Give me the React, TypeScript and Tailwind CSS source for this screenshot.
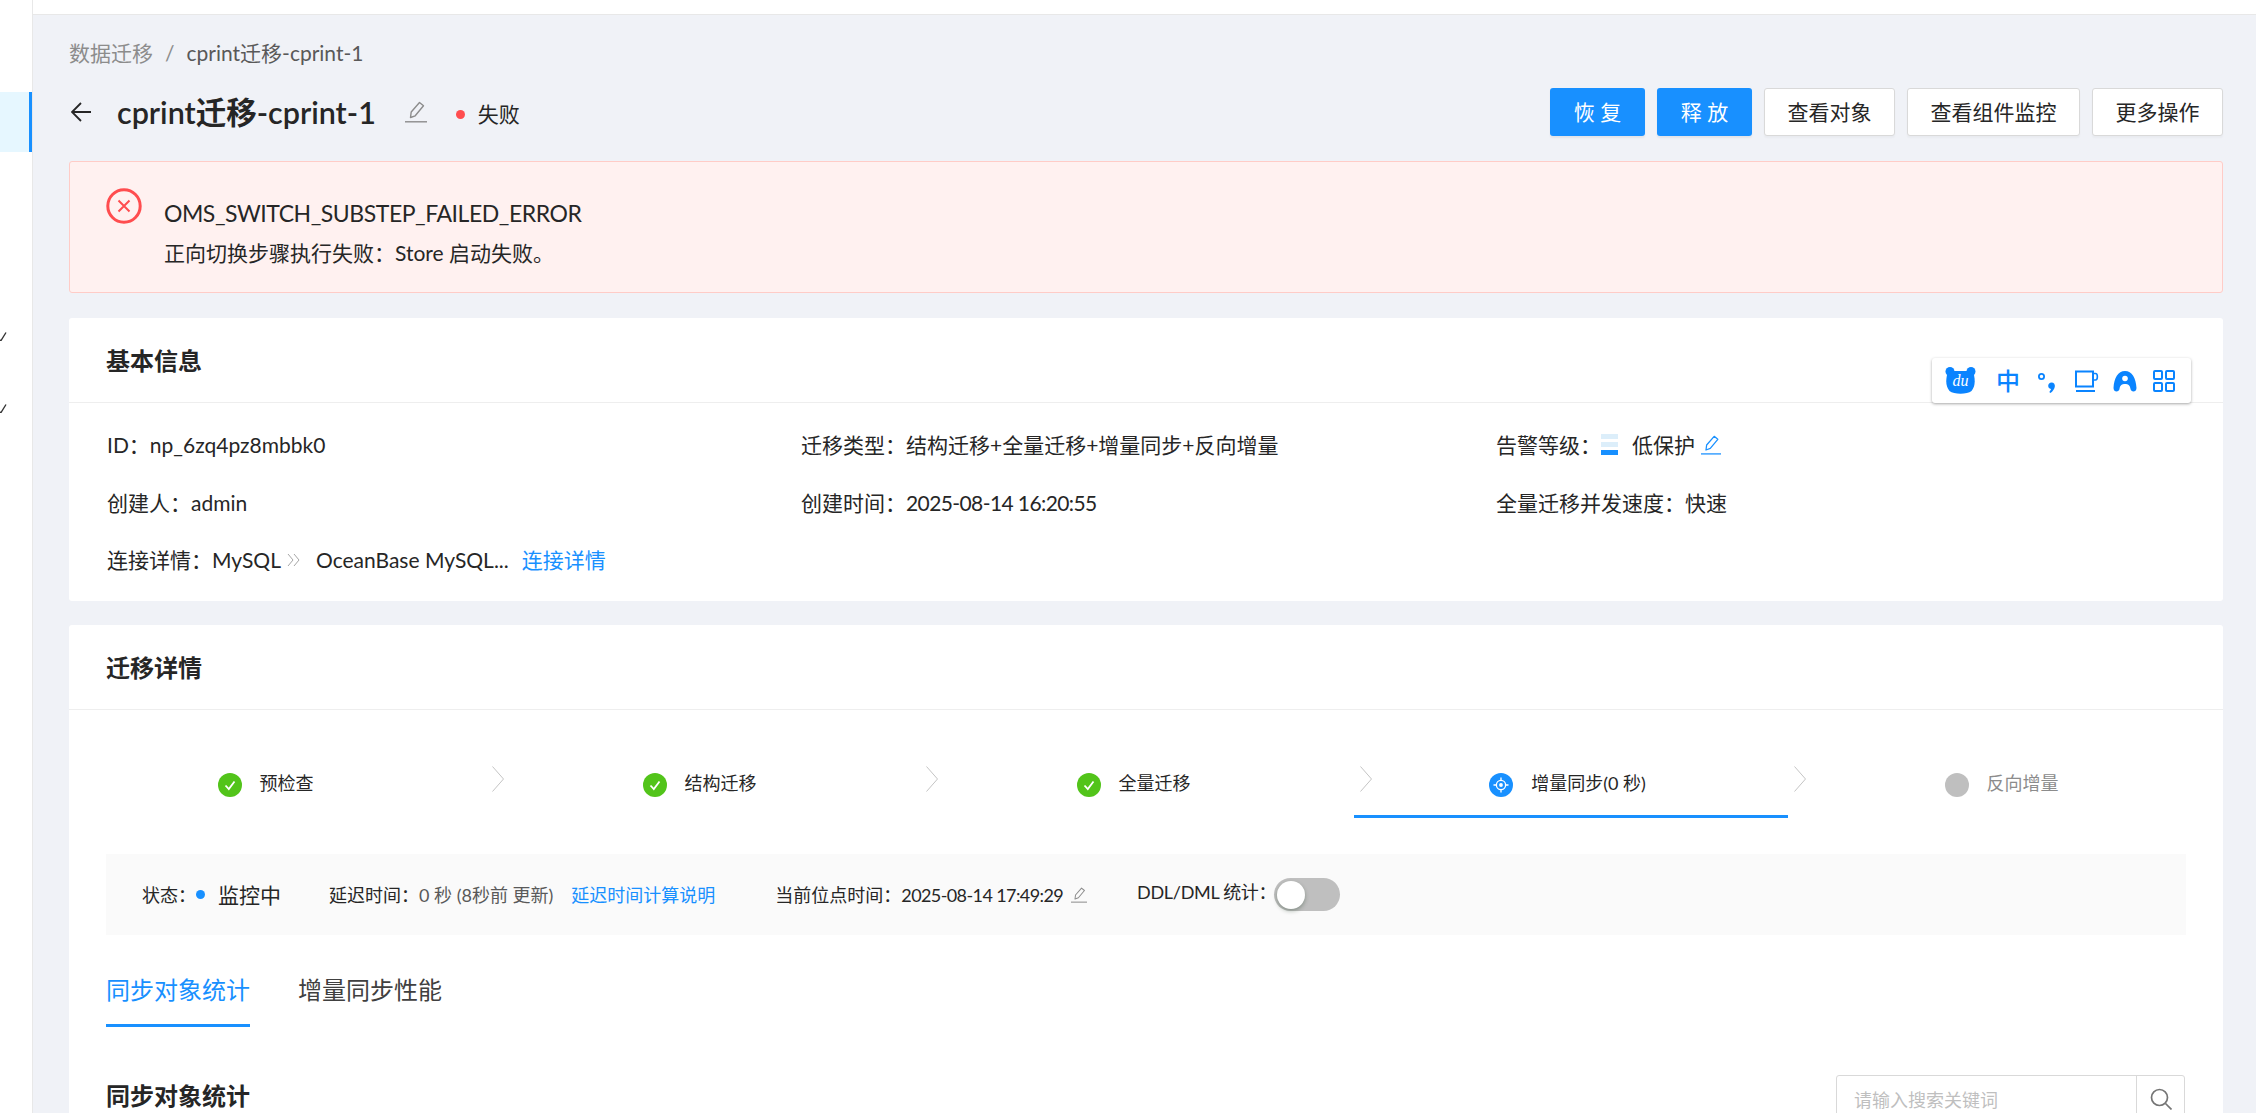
import React from 'react'

const steps = [
  { label: '预检查', state: 'done' },
  { label: '结构迁移', state: 'done' },
  { label: '全量迁移', state: 'done' },
  { label: '增量同步(0 秒)', state: 'active' },
  { label: '反向增量', state: 'pending' }
]

function EditIcon({ className }: { className: string }): React.ReactElement {
  return (
    <svg viewBox="0 0 22 22" fill="none" stroke="currentColor" strokeWidth="1.4" className={className}>
      <path d="M0 20.8H22" />
      <path d="M5.5 16.5L6.2 11L14.5 1.5L18.5 4.8L10.2 14.8L5.5 16.5Z" strokeLinejoin="round" />
    </svg>
  )
}

function StepIcon({ state }: { state: string }): React.ReactElement {
  if (state === 'done') {
    return (
      <svg viewBox="0 0 24 24" className="h-6 w-6 shrink-0">
        <circle cx="12" cy="12" r="12" fill="#52c41a" />
        <path d="M7.5 12.5L10.8 16L16.5 8.5" fill="none" stroke="#fff" strokeWidth="1.8" />
      </svg>
    )
  }
  if (state === 'active') {
    return (
      <svg viewBox="0 0 24 24" className="h-6 w-6 shrink-0">
        <circle cx="12" cy="12" r="12" fill="#1890ff" />
        <circle cx="12" cy="12" r="4.6" fill="none" stroke="#fff" strokeWidth="1.3" />
        <circle cx="12" cy="12" r="1.9" fill="#fff" />
        <path d="M12 4.5V7M12 17V19.5M4.5 12H7M17 12H19.5" stroke="#fff" strokeWidth="1.3" />
      </svg>
    )
  }
  return <span className="h-6 w-6 shrink-0 rounded-full bg-[#bfbfbf]" />
}

function StepChevron(): React.ReactElement {
  return (
    <svg viewBox="0 0 12 26" fill="none" stroke="#c4c4c4" className="absolute top-[11px] right-[-18px] h-[26px] w-3">
      <path d="M0.5 0.5L11.5 13L0.5 25.5" />
    </svg>
  )
}

function InputMethodBar(): React.ReactElement {
  return (
    <div className="absolute top-[40px] left-[1863px] flex h-[45px] w-[259px] items-center rounded-[3px] bg-white pl-[13px] shadow-[0_1px_3px_rgba(0,0,0,0.35)]">
      <div className="relative flex h-[27px] w-[31px] items-center justify-center">
        <svg viewBox="0 0 31 27" className="absolute inset-0 h-full w-full">
          <circle cx="5" cy="4.5" r="4.5" fill="#0a84ff" />
          <circle cx="26" cy="4.5" r="4.5" fill="#0a84ff" />
          <path d="M3 4H28C30.5 13 30.5 19 26.5 24C22 27.5 9 27.5 4.5 24C0.5 19 0.5 13 3 4Z" fill="#0a84ff" />
        </svg>
        <span className="relative [font-family:Liberation_Serif,serif] text-[16px] leading-none text-white italic">du</span>
      </div>
      <span className="ml-[20px] w-[24px] text-[24px] leading-none font-medium text-[#0a84ff]">中</span>
      <svg viewBox="0 0 20 24" className="ml-[16px] h-6 w-5">
        <circle cx="5.5" cy="7.5" r="2.6" fill="none" stroke="#0a84ff" strokeWidth="1.8" />
        <path d="M15.5 13.5C18 13.5 19.3 15.5 18.8 17.8C18.4 20 16.8 22.5 14.5 24L13.2 23C14.3 21.8 14.8 20.8 15 20C13.3 19.8 12.2 18.4 12.2 16.8C12.2 15 13.7 13.5 15.5 13.5Z" fill="#0a84ff" />
      </svg>
      <svg viewBox="0 0 24 24" className="ml-[19px] h-6 w-6" fill="none" stroke="#0a84ff" strokeWidth="2">
        <path d="M1 2.5H18V17.5H1Z" />
        <path d="M18 4.5H20.5C23 4.5 23 11 20.5 11H18" strokeWidth="1.6" />
        <path d="M1 22H20" />
      </svg>
      <svg viewBox="0 0 24 24" className="ml-[14px] h-6 w-6">
        <path d="M12 2C5 2 1 9 0.5 19C0.5 23.5 6 23.5 6.5 20C7 16 9 15 12 15C15 15 17 16 17.5 20C18 23.5 23.5 23.5 23.5 19C23 9 19 2 12 2Z" fill="#0a84ff" />
        <circle cx="12" cy="9.5" r="2.8" fill="#fff" />
      </svg>
      <svg viewBox="0 0 22 22" className="ml-[16px] h-[22px] w-[22px]" fill="none" stroke="#0a84ff" strokeWidth="2">
        <rect x="1" y="1" width="8" height="8" rx="1" />
        <rect x="13" y="1" width="8" height="8" rx="1" />
        <rect x="1" y="13" width="8" height="8" rx="1" />
        <rect x="13" y="13" width="8" height="8" rx="1" />
      </svg>
    </div>
  )
}

export default function App(): React.ReactElement {
  return (
    <div lang="zh-CN" className="flex h-[1113px] w-[2256px] overflow-hidden bg-[#f0f2f7] [font-family:Lato,Noto_Sans_CJK_SC,sans-serif] text-[21px] text-[#262626]">
      <aside className="h-full w-[33px] shrink-0 border-r border-[#e8e8e8] bg-white pt-[92px]">
        <div className="h-[60px] w-[32px] border-r-[3px] border-[#1890ff] bg-[#e6f7ff]" />
        <svg viewBox="0 0 8 10" fill="none" stroke="#333" strokeWidth="1.4" className="mt-[179px] h-[10px] w-2">
          <path d="M-2 9L1 9.5L6 1.5" />
        </svg>
        <svg viewBox="0 0 8 10" fill="none" stroke="#333" strokeWidth="1.4" className="mt-[62px] h-[10px] w-2">
          <path d="M-2 9L1 9.5L6 1.5" />
        </svg>
      </aside>

      <div className="min-w-0 flex-1">
        <div className="h-[15px] border-b border-[#e8e8e8] bg-white" />
        <main className="pr-[33px] pl-[36px]">
          <div className="mt-[21px] flex h-[32px] items-center leading-none">
            <span className="text-[#8c8c8c]">数据迁移</span>
            <span className="mx-[12px] text-[#8c8c8c]">/</span>
            <span className="text-[#595959]">cprint迁移-cprint-1</span>
          </div>

          <div className="mt-[20px] flex h-[48px] items-center">
            <svg viewBox="0 0 20 20" fill="none" stroke="#262626" strokeWidth="1.8" className="ml-[2px] h-5 w-5">
              <path d="M20 10H1M10 1L1 10L10 19" />
            </svg>
            <h1 className="ml-[26px] text-[30.5px] leading-none font-semibold">cprint迁移-cprint-1</h1>
            <EditIcon className="ml-[29px] h-[22px] w-[22px] text-[#8c8c8c]" />
            <span className="mt-[4px] ml-[29px] h-[9px] w-[9px] rounded-full bg-[#ff4d4f]" />
            <span className="mt-[3px] ml-[13px]">失败</span>
            <div className="ml-auto flex gap-[12px]">
              <button type="button" className="h-[48px] w-[95px] rounded-[3px] bg-[#1890ff] text-white shadow-[0_2px_2px_rgba(0,0,0,0.06)]">恢 复</button>
              <button type="button" className="h-[48px] w-[95px] rounded-[3px] bg-[#1890ff] text-white shadow-[0_2px_2px_rgba(0,0,0,0.06)]">释 放</button>
              <button type="button" className="h-[48px] rounded-[3px] border border-[#d9d9d9] bg-white px-[22.5px] shadow-[0_2px_2px_rgba(0,0,0,0.03)]">查看对象</button>
              <button type="button" className="h-[48px] rounded-[3px] border border-[#d9d9d9] bg-white px-[22.5px] shadow-[0_2px_2px_rgba(0,0,0,0.03)]">查看组件监控</button>
              <button type="button" className="h-[48px] rounded-[3px] border border-[#d9d9d9] bg-white px-[22.5px] shadow-[0_2px_2px_rgba(0,0,0,0.03)]">更多操作</button>
            </div>
          </div>

          <section className="mt-[25px] flex h-[132px] rounded-[3px] border border-[#ffccc7] bg-[#fff1f0] pt-[26px] pl-[36px]">
            <svg viewBox="0 0 36 36" fill="none" stroke="#ff4d4f" className="h-9 w-9 shrink-0">
              <circle cx="18" cy="18" r="16.2" strokeWidth="3" />
              <path d="M12.5 12.5L23.5 23.5M23.5 12.5L12.5 23.5" strokeWidth="2" />
            </svg>
            <div className="ml-[22px]">
              <div className="mt-[7px] text-[23px] leading-[36px] tracking-[-0.45px]">OMS_SWITCH_SUBSTEP_FAILED_ERROR</div>
              <div className="mt-[6px] leading-[31px]">正向切换步骤执行失败：Store 启动失败。</div>
            </div>
          </section>

          <section className="relative mt-[25px] h-[283px] rounded-[3px] bg-white">
            <div className="flex h-[85px] items-center border-b border-[#eeeeee] pt-[1px] pl-[37px] text-[24px] font-bold">基本信息</div>
            <InputMethodBar />
            <div className="grid grid-cols-[694px_695px_1fr] gap-y-[26px] pt-[26px] pl-[38px] leading-[31.5px]">
              <div>ID：np_6zq4pz8mbbk0</div>
              <div>迁移类型：结构迁移+全量迁移+增量同步+反向增量</div>
              <div className="flex items-center">
                告警等级：
                <span className="mr-[14px] flex h-[21px] w-[17px] flex-col justify-between">
                  <span className="h-[5px] bg-[#dceefa]" />
                  <span className="h-[5px] bg-[#dceefa]" />
                  <span className="h-[5px] bg-[#1890ff]" />
                </span>
                低保护
                <EditIcon className="ml-[6px] h-[20px] w-[20px] text-[#1890ff]" />
              </div>
              <div>创建人：admin</div>
              <div>
                创建时间：<span className="tracking-[-0.6px]">2025-08-14 16:20:55</span>
              </div>
              <div>全量迁移并发速度：快速</div>
              <div className="col-span-3 flex items-center">
                连接详情：MySQL
                <svg viewBox="0 0 13 14" fill="none" stroke="#a6a6a6" className="mr-[16px] ml-[6px] h-[14px] w-[13px]">
                  <path d="M1 1L6 7L1 13M7 1L12 7L7 13" />
                </svg>
                OceanBase MySQL...
                <span className="ml-[13px] text-[#1890ff]">连接详情</span>
              </div>
            </div>
          </section>

          <section className="mt-[24px] h-[600px] rounded-[3px] bg-white">
            <div className="flex h-[85px] items-center border-b border-[#eeeeee] pt-[2px] pl-[37px] text-[24px] font-bold">迁移详情</div>
            <div className="mt-[45px] ml-[-17px] grid w-[2170px] grid-cols-5">
              {steps.map((step, i) => (
                <div
                  key={step.label}
                  className={
                    step.state === 'active'
                      ? 'relative flex h-[63px] items-center justify-center gap-[18px] border-b-[3px] border-[#1890ff] pr-[7px] text-[18px]'
                      : 'relative flex h-[63px] items-center justify-center gap-[18px] border-b-[3px] border-transparent pr-[7px] text-[18px]'
                  }
                >
                  <StepIcon state={step.state} />
                  <span className={step.state === 'pending' ? 'pb-[3px] text-[#8c8c8c]' : 'pb-[3px]'}>{step.label}</span>
                  {i < steps.length - 1 && <StepChevron />}
                </div>
              ))}
            </div>

            <div className="mx-[37px] mt-[36px] flex h-[81px] items-center bg-[#fafafa] pl-[36px] text-[18px] leading-none">
              <span>状态：</span>
              <span className="h-[9px] w-[9px] rounded-full bg-[#1890ff]" />
              <span className="ml-[13px] text-[21px]">监控中</span>
              <span className="ml-[48px]">延迟时间：</span>
              <span className="text-[#595959]">0 秒 (8秒前 更新)</span>
              <span className="ml-[18px] text-[#1890ff]">延迟时间计算说明</span>
              <span className="ml-[60px]">当前位点时间：</span>
              <span className="tracking-[-0.6px]">2025-08-14 17:49:29</span>
              <EditIcon className="ml-[8px] h-[16px] w-[16px] text-[#8c8c8c]" />
              <span className="ml-[50px] pb-[6px] tracking-[-0.3px]">DDL/DML 统计：</span>
              <span className="ml-[-2px] flex h-[33px] w-[66px] items-center rounded-full bg-[#bfbfbf] pl-[3px]">
                <span className="h-[28px] w-[28px] rounded-full bg-white shadow-[0_2px_4px_rgba(0,35,11,0.3)]" />
              </span>
            </div>

            <div className="mx-[37px] mt-[36px] flex gap-[48px] text-[24px] leading-none">
              <div className="flex h-[56px] flex-col border-b-[3px] border-[#1890ff] pt-[7px] text-[#1890ff]">同步对象统计</div>
              <div className="flex h-[56px] flex-col pt-[7px] text-[#404040]">增量同步性能</div>
            </div>

            <div className="mt-[48px] mr-[38px] ml-[37px] flex items-start justify-between">
              <h2 className="mt-[3px] text-[24px] leading-[36px] font-bold">同步对象统计</h2>
              <div className="flex h-[48px] w-[349px] items-center rounded-[3px] border border-[#d9d9d9] text-[18px] text-[#bfbfbf]">
                <span className="flex-1 pt-[2px] pl-[17px]">请输入搜索关键词</span>
                <span className="flex h-full w-[48px] items-center justify-center border-l border-[#d9d9d9]">
                  <svg viewBox="0 0 22 22" fill="none" stroke="#757575" strokeWidth="1.7" className="h-[22px] w-[22px]">
                    <circle cx="9.5" cy="9.5" r="8" />
                    <path d="M15.5 15.5L21.5 21.5" />
                  </svg>
                </span>
              </div>
            </div>
          </section>
        </main>
      </div>
    </div>
  )
}
